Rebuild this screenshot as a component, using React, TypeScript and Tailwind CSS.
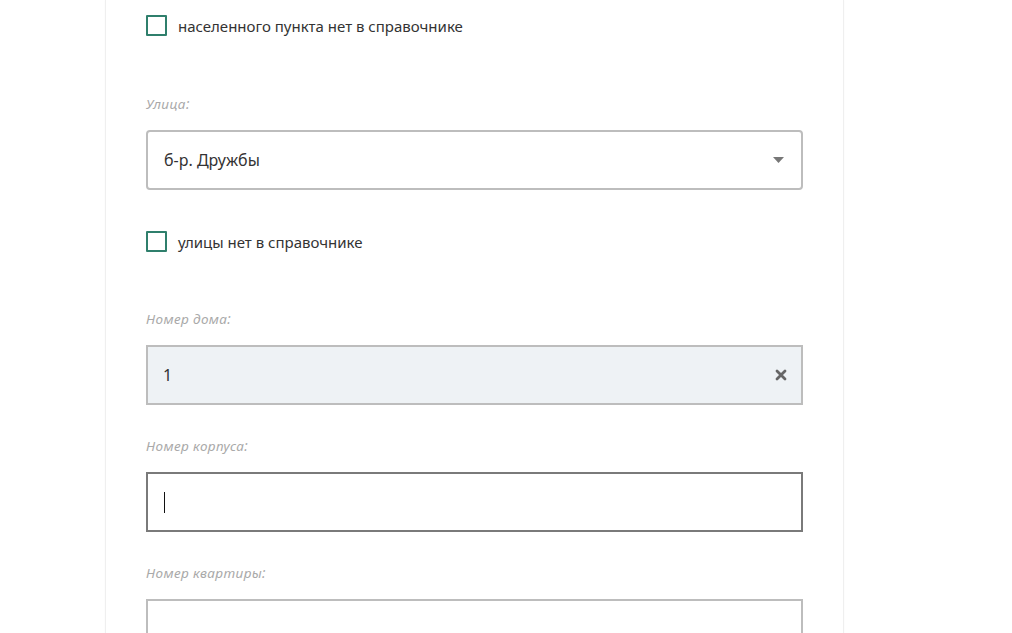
import React from "react";

function Checkbox({ label }: { label: string }) {
  return (
    <div className="flex items-center gap-[11px] h-[21px]">
      <div className="w-[21px] h-[21px] border-2 border-[#2f7f6c] rounded-[1px] bg-white shrink-0" />
      <span className="text-[15px] text-[#333] leading-none pt-[1px]">{label}</span>
    </div>
  );
}

function Label({ text }: { text: string }) {
  return (
    <div className="h-[18px] leading-[18px] text-[13.5px] tracking-[0.4px] italic text-[#a9a9a9] mb-[17px]">{text}</div>
  );
}

export default function App() {
  return (
    <div
      className="min-h-screen bg-white overflow-hidden"
      style={{ fontFamily: '"Noto Sans", "Open Sans", sans-serif' }}
    >
      <div className="ml-[105px] w-[739px] min-h-[633px] border-x border-[#efefef] bg-white px-[40px] pt-[15px] shadow-[0_0_2px_rgba(0,0,0,0.03)]">
        <Checkbox label="населенного пункта нет в справочнике" />

        <div className="mt-[59px]">
          <Label text="Улица:" />
          <div className="h-[60px] border-2 border-[#bdbdbd] rounded-[4px] flex items-center justify-between pl-[16px] pr-[16px]">
            <span className="text-[16px] text-[#333]">б-р. Дружбы</span>
            <svg width="11" height="6" viewBox="0 0 11 6" className="mr-[1px]">
              <path d="M0 0 L11 0 L5.5 6 Z" fill="#777" />
            </svg>
          </div>
        </div>

        <div className="mt-[41px]">
          <Checkbox label="улицы нет в справочнике" />
        </div>

        <div className="mt-[58px]">
          <Label text="Номер дома:" />
          <div className="h-[60px] border-2 border-[#bdbdbd] bg-[#eef2f5] flex items-center justify-between pl-[15px] pr-[14px]">
            <span className="text-[16px] text-[#333]">1</span>
            <svg width="12" height="12" viewBox="0 0 12 12">
              <path d="M2 2 L10 10 M10 2 L2 10" stroke="#666" strokeWidth="2.8" strokeLinecap="round" />
            </svg>
          </div>
        </div>

        <div className="mt-[32px]">
          <Label text="Номер корпуса:" />
          <div className="h-[60px] border-2 border-[#7a7a7a] bg-white flex items-center pl-[16px]">
            <div className="w-px h-[21px] bg-[#111]" />
          </div>
        </div>

        <div className="mt-[32px]">
          <Label text="Номер квартиры:" />
          <div className="h-[60px] border-2 border-[#bdbdbd] bg-white" />
        </div>
      </div>
    </div>
  );
}
